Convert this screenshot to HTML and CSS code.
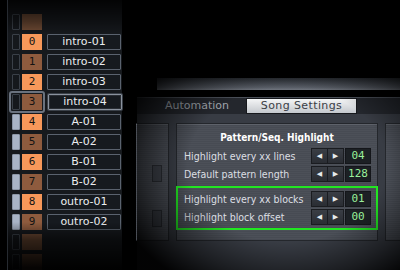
FILE: index.html
```html
<!DOCTYPE html>
<html lang="en">
<head>
  <meta charset="UTF-8" />
  <title>Song Settings</title>
  <link rel="stylesheet" href="styles.css">
</head>
<body>
  <div class="seq">
    <div class="row ghost"><span class="mute"></span><span class="num dim"></span></div>
    <div class="row"><span class="mute"></span><span class="num hi">0</span><span class="name">intro-01</span></div>
    <div class="row"><span class="mute"></span><span class="num">1</span><span class="name">intro-02</span></div>
    <div class="row"><span class="mute"></span><span class="num hi">2</span><span class="name">intro-03</span></div>
    <div class="row sel"><span class="pick"><span class="mute"></span><span class="num">3</span></span><span class="name">intro-04</span></div>
    <div class="row"><span class="mute on"></span><span class="num hi">4</span><span class="name">A-01</span></div>
    <div class="row"><span class="mute on"></span><span class="num">5</span><span class="name">A-02</span></div>
    <div class="row"><span class="mute on"></span><span class="num hi">6</span><span class="name">B-01</span></div>
    <div class="row"><span class="mute on"></span><span class="num">7</span><span class="name">B-02</span></div>
    <div class="row"><span class="mute on"></span><span class="num hi">8</span><span class="name">outro-01</span></div>
    <div class="row"><span class="mute on"></span><span class="num">9</span><span class="name">outro-02</span></div>
    <div class="row ghost"><span class="mute"></span><span class="num dim"></span></div>
    <div class="row ghost"><span class="mute"></span><span class="num dim"></span></div>
  </div>

  <div class="main">
    <div class="frame-top"></div>
    <div class="tabs">
      <span class="tab">Automation</span>
      <span class="tab active">Song Settings</span>
    </div>
    <div class="groups">
      <div class="group side-l">
        <span class="stub s1"></span>
        <span class="stub s2"></span>
      </div>
      <div class="group">
        <div class="title">Pattern/Seq. Highlight</div>
        <div class="opt">
          <span class="label">Highlight every xx lines</span>
          <span class="arrows"><b>&#9664;</b><b>&#9654;</b></span>
          <span class="val">04</span>
        </div>
        <div class="opt">
          <span class="label">Default pattern length</span>
          <span class="arrows"><b>&#9664;</b><b>&#9654;</b></span>
          <span class="val">128</span>
        </div>
        <div class="focus">
          <div class="opt">
            <span class="label">Highlight every xx blocks</span>
            <span class="arrows"><b>&#9664;</b><b>&#9654;</b></span>
            <span class="val">01</span>
          </div>
          <div class="opt">
            <span class="label">Highlight block offset</span>
            <span class="arrows"><b>&#9664;</b><b>&#9654;</b></span>
            <span class="val">00</span>
          </div>
        </div>
      </div>
      <div class="group side-r"></div>
    </div>
    <div class="shade"></div>
  </div>
</body>
</html>
```

FILE: styles.css
```css
body {
  margin: 0;
  width: 400px;
  height: 270px;
  overflow: hidden;
  background: #000;
  display: flex;
  font-family: 'DejaVu Sans', sans-serif;
}

/* sequencer list */
.seq {
  position: relative;
  width: 117px;
  margin-left: 7px;
  padding-top: 14px;
  background: #16191d;
  border-left: 1px solid #262a30;
  display: flex;
  flex-direction: column;
  gap: 4px;
}
.seq::after {
  content: "";
  position: absolute;
  inset: 0;
  background: linear-gradient(to bottom, rgba(0,0,0,.85) 0, rgba(0,0,0,.35) 22px, transparent 34px, transparent 222px, rgba(0,0,0,.55) 240px, rgba(0,0,0,.95) 268px);
}
.row {
  height: 16px;
  display: flex;
  align-items: center;
  padding-left: 4px;
}
.mute {
  width: 6px;
  height: 14px;
  border: 1px solid #3a4048;
  background: #15181c;
  border-radius: 1px;
}
.mute.on {
  background: #a9b4c6;
  border-color: #8c96a6;
}
.num {
  width: 20px;
  height: 16px;
  margin-left: 2px;
  background: #8e5b3e;
  color: #121212;
  font-family: 'DejaVu Sans Mono', monospace;
  font-size: 11px;
  line-height: 16px;
  text-align: center;
}
.num.hi { background: #f7985a; }
.num.dim { background: #6e4a34; }
.name {
  width: 72px;
  height: 14px;
  margin-left: 5px;
  background: #161a1f;
  border: 1px solid #5a626e;
  border-radius: 1px;
  color: #eceef0;
  font-size: 11px;
  line-height: 14px;
  text-align: center;
}
.pick {
  display: flex;
  align-items: center;
  margin: -3px 0 -3px -3px;
  padding: 1px;
  border: 2px solid #6a727e;
  border-radius: 3px;
}
.sel .name {
  margin-left: 3px;
  border-color: #8a929e;
  box-shadow: inset 0 0 0 1px #2a2e34, 0 0 0 1px #3a4048;
}

/* main panel */
.main {
  position: relative;
  flex: 1;
  margin-left: 15px;
  padding-top: 78px;
  display: flex;
  flex-direction: column;
}
.frame-top {
  height: 12px;
  margin: 0 4px 0 20px;
  background: linear-gradient(to bottom, #2a2e34, #5a5f68 80%, #70757e);
}
.tabs {
  margin-top: 7px;
  height: 16px;
  padding-left: 24px;
  background: #24272d;
  border-top: 1px solid #4a4f58;
  display: flex;
}
.tab {
  width: 85px;
  font-size: 11px;
  line-height: 16px;
  color: #a0a6ae;
  padding-left: 4px;
  box-sizing: border-box;
}
.tab.active {
  width: 111px;
  height: 16px;
  box-sizing: border-box;
  padding-left: 0;
  text-align: center;
  color: #3a3e46;
  line-height: 14px;
  letter-spacing: 0.4px;
  border: 1px solid #16181c;
  background: linear-gradient(to bottom, #f4f5f6, #c4c8cd);
}
.groups {
  flex: 1;
  padding-top: 9px;
  background: #383c44;
  display: flex;
  gap: 7px;
}
.group {
  width: 188px;
  height: 116px;
  flex: none;
  border: 1px solid #24272c;
  box-shadow: inset 0 1px 0 #5e626a;
  background: repeating-linear-gradient(to bottom, #4c5058 0, #4c5058 1px, #474b53 1px, #474b53 2px);
  padding: 0 6px;
  display: flex;
  flex-direction: column;
}
.group.side-l {
  width: 32px;
  padding: 0;
  margin-left: -1px;
  border-left: 0;
  position: relative;
}
.group.side-r {
  width: 20px;
  padding: 0;
}
.stub {
  position: absolute;
  right: 6px;
  width: 8px;
  height: 15px;
  border: 1px solid #2a2d33;
  background: #3e424a;
}
.stub.s1 { top: 41px; }
.stub.s2 { top: 86px; }
.title {
  margin-top: 6px;
  height: 16px;
  text-align: center;
  color: #fff;
  font-weight: bold;
  font-size: 10px;
  font-stretch: condensed;
  line-height: 16px;
}
.opt {
  height: 16px;
  margin-top: 2px;
  display: flex;
  align-items: center;
}
.label {
  flex: 1;
  color: #dcdfe3;
  font-size: 10.5px;
  font-stretch: condensed;
  line-height: 16px;
  padding-left: 1px;
}
.arrows {
  display: flex;
}
.arrows b {
  width: 15px;
  height: 14px;
  border: 1px solid #1a1c20;
  margin-right: -1px;
  background: linear-gradient(to bottom, #3a3e45, #2a2d33);
  color: #e8eaec;
  font-size: 7px;
  line-height: 14px;
  text-align: center;
  font-weight: normal;
}
.val {
  width: 24px;
  height: 14px;
  margin-left: 2px;
  border: 1px solid #14161a;
  background: #1c2024;
  color: #9af09a;
  font-family: 'DejaVu Sans Mono', monospace;
  font-size: 11px;
  line-height: 14px;
  text-align: center;
}
.focus {
  margin: 4px -7px 0;
  padding: 1px 5px 3px;
  border: 2px solid #22e622;
}

/* vignette */
.shade {
  position: absolute;
  inset: 0;
  background: radial-gradient(ellipse 180px 140px at 150px 165px, transparent 55%, rgba(0,0,0,.5) 80%, rgba(0,0,0,.95) 100%);
  pointer-events: none;
}
```
